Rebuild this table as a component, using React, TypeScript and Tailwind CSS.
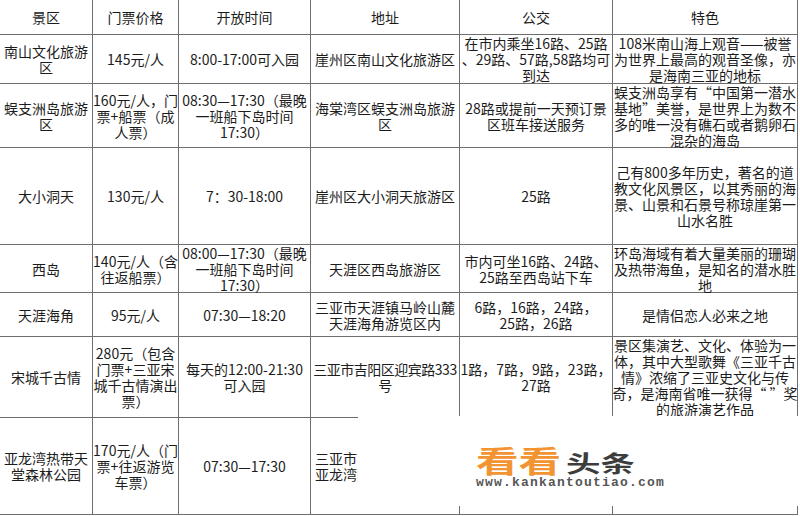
import React from "react";

type Row = { h: string; cells: string[][] };

const cols = ["w-[93px]", "w-[86px]", "w-[132px]", "w-[149px]", "w-[153px]", "w-[185px]"];

const rows: Row[] = [
  { h: "h-[35px]", cells: [["景区"], ["门票价格"], ["开放时间"], ["地址"], ["公交"], ["特色"]] },
  {
    h: "h-[49px]",
    cells: [
      ["南山文化旅游", "区"],
      ["145元/人"],
      ["8:00-17:00可入园"],
      ["崖州区南山文化旅游区"],
      ["在市内乘坐16路、25路", "、29路、57路,58路均可", "到达"],
      ["108米南山海上观音——被誉", "为世界上最高的观音圣像，亦", "是海南三亚的地标"],
    ],
  },
  {
    h: "h-[64px]",
    cells: [
      ["蜈支洲岛旅游", "区"],
      ["160元/人，门", "票+船票（成", "人票）"],
      ["08:30—17:30（最晚", "一班船下岛时间", "17:30）"],
      ["海棠湾区蜈支洲岛旅游", "区"],
      ["28路或提前一天预订景", "区班车接送服务"],
      ["蜈支洲岛享有“中国第一潜水", "基地”美誉，是世界上为数不", "多的唯一没有礁石或者鹅卵石", "混杂的海岛"],
    ],
  },
  {
    h: "h-[97px]",
    cells: [
      ["大小洞天"],
      ["130元/人"],
      ["7：30-18:00"],
      ["崖州区大小洞天旅游区"],
      ["25路"],
      ["己有800多年历史，著名的道", "教文化风景区，以其秀丽的海", "景、山景和石景号称琼崖第一", "山水名胜"],
    ],
  },
  {
    h: "h-[48px]",
    cells: [
      ["西岛"],
      ["140元/人（含", "往返船票）"],
      ["08:00—17:30（最晚", "一班船下岛时间", "17:30）"],
      ["天涯区西岛旅游区"],
      ["市内可坐16路、24路、", "25路至西岛站下车"],
      ["环岛海域有着大量美丽的珊瑚", "及热带海鱼，是知名的潜水胜", "地"],
    ],
  },
  {
    h: "h-[44px]",
    cells: [
      ["天涯海角"],
      ["95元/人"],
      ["07:30—18:20"],
      ["三亚市天涯镇马岭山麓", "天涯海角游览区内"],
      ["6路，16路，24路，", "25路，26路"],
      ["是情侣恋人必来之地"],
    ],
  },
  {
    h: "h-[81px]",
    cells: [
      ["宋城千古情"],
      ["280元（包含", "门票+三亚宋", "城千古情演出", "票）"],
      ["每天的12:00-21:30", "可入园"],
      ["三亚市吉阳区迎宾路333", "号"],
      ["1路，7路，9路，23路，", "27路"],
      ["景区集演艺、文化、体验为一", "体，其中大型歌舞《三亚千古", "情》浓缩了三亚史文化与传", "奇，是海南省唯一获得“ ”奖", "的旅游演艺作品"],
    ],
  },
  {
    h: "h-[97px]",
    cells: [
      ["亚龙湾热带天", "堂森林公园"],
      ["170元/人（门", "票+往返游览", "车票）"],
      ["07:30—17:30"],
      ["三亚市吉阳区博后村内", "亚龙湾国家旅游度假区"],
      ["亚龙湾专线"],
      ["全国唯一处于城市中心的热带", "雨林国家公园"],
    ],
  },
];

export default function App() {
  return (
    <div
      className="relative w-[800px] h-[516px] bg-white overflow-hidden text-[#1c1c1c]"
      style={{ fontFamily: '"Noto Sans CJK SC", "Noto Sans", sans-serif' }}
    >
      <div className="flex flex-col w-[798px]">
        {rows.map((r, ri) => (
          <div key={ri} className={`flex ${r.h}`}>
            {r.cells.map((lines, ci) => (
              <div
                key={ci}
                className={`${cols[ci]} h-full shrink-0 border-r border-b border-[#6e6e6e] flex items-center justify-center text-center text-[14px] leading-[16px] whitespace-nowrap overflow-visible ${
                  ri === 6 && ci === 3 ? "tracking-[-0.5px]" : ""
                }`}
              >
                <div>
                  {lines.map((l, li) => (
                    <div key={li}>{l}</div>
                  ))}
                </div>
              </div>
            ))}
          </div>
        ))}
      </div>

      {/* watermark patch */}
      <div className="absolute left-[358px] top-[416px] w-[442px] h-[90px] bg-white" />
      <div className="absolute left-[476px] top-[439px] flex flex-col">
        <div className="flex items-end h-[37px]">
          <span className="inline-block origin-left [transform:scaleX(1.42)] w-[90px] text-[30px] leading-[34px] font-bold text-[#f39433] whitespace-nowrap">
            看看
          </span>
          <span className="inline-block origin-left [transform:scaleX(1.5)] text-[23px] leading-[28px] font-bold text-[#3d3d3d] whitespace-nowrap">
            头条
          </span>
        </div>
        <div
          className="text-[13px] leading-[14px] font-bold text-[#555] tracking-[1.2px] whitespace-nowrap"
          style={{ fontFamily: '"Liberation Mono", "DejaVu Sans Mono", monospace' }}
        >
          www.kankantoutiao.com
        </div>
      </div>
    </div>
  );
}
